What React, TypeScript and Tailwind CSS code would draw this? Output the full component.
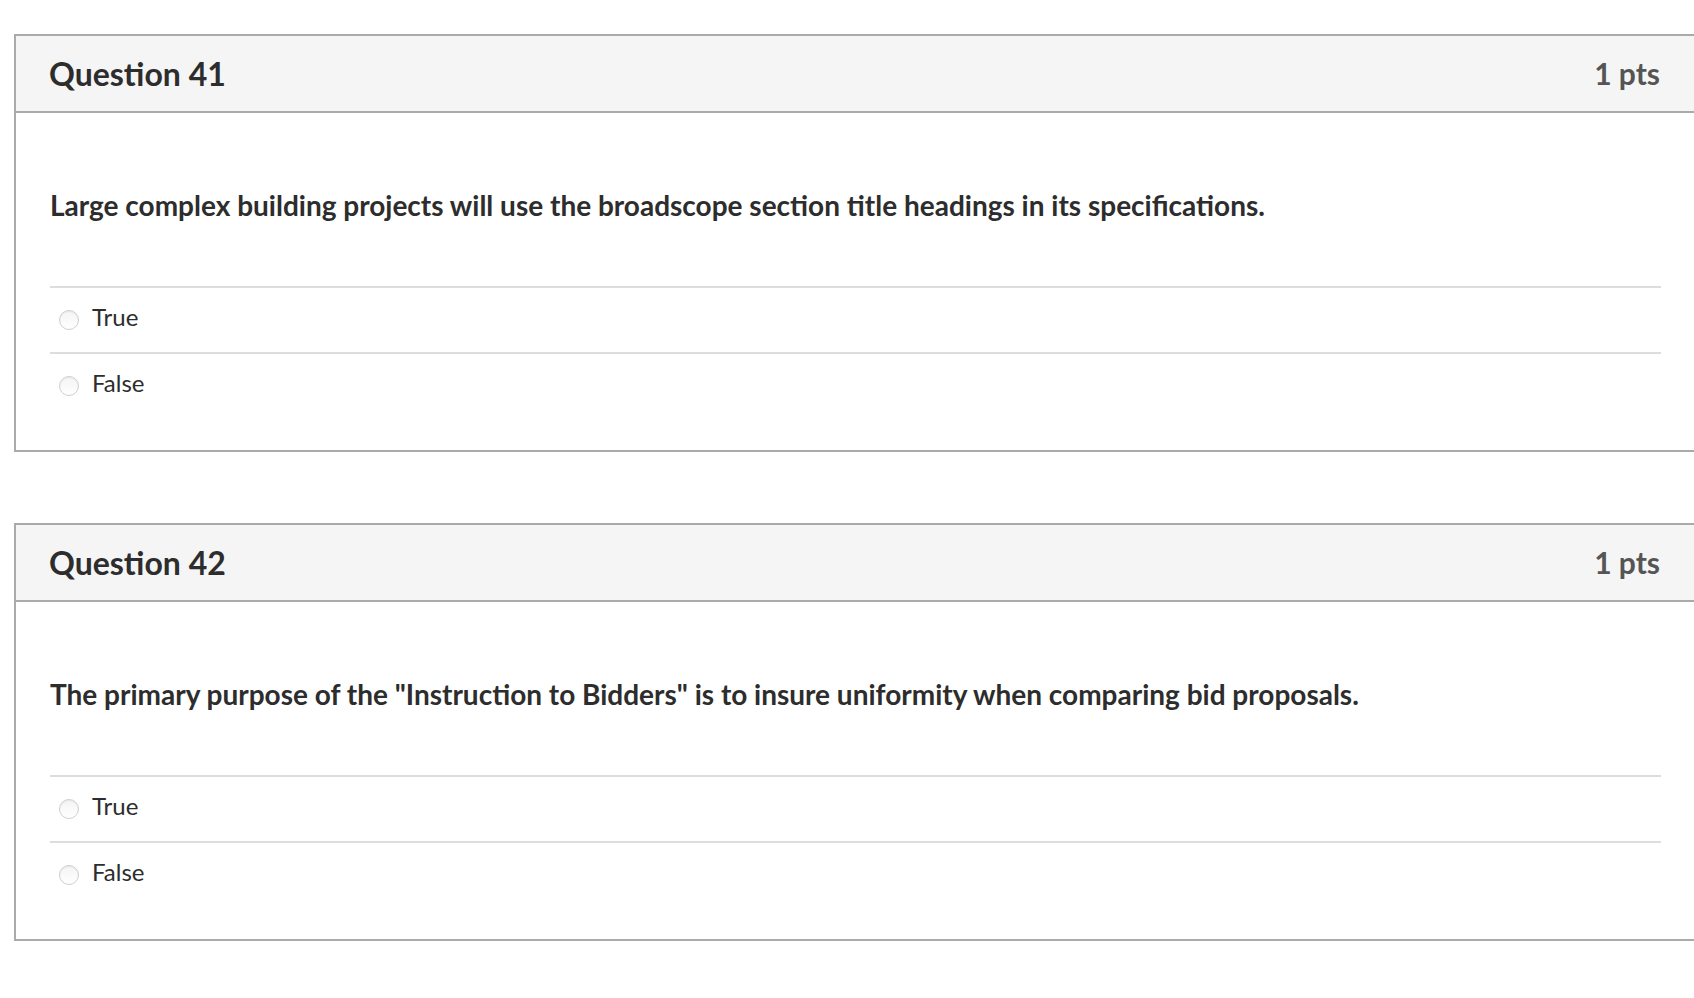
const questions = [
  {
    id: 41,
    points: 1,
    text: 'Large complex building projects will use the broadscope section title headings in its specifications.',
    answers: ['True', 'False'],
  },
  {
    id: 42,
    points: 1,
    text: 'The primary purpose of the "Instruction to Bidders" is to insure uniformity when comparing bid proposals.',
    answers: ['True', 'False'],
  },
];

function Radio() {
  return (
    <span className="ml-[9px] h-5 w-5 shrink-0 rounded-full border border-[#cfcfcf] bg-gradient-to-b from-[#f4f4f4] to-white shadow-[inset_0_1px_1px_rgba(0,0,0,0.06)]" />
  );
}

function QuestionCard({ q }: { q: (typeof questions)[number] }) {
  return (
    <div className="border-y-2 border-l-2 border-[#aaaaaa] bg-white">
      <header className="flex h-[77px] items-center justify-between border-b-2 border-[#aaaaaa] bg-[#f5f5f5] pl-[33px] pr-[34px]">
        <h2 className="text-[32px] font-bold text-[#2d2d2d]">Question {q.id}</h2>
        <span className="text-[30px] font-bold text-[#555555]">{q.points} pts</span>
      </header>
      <div className="pb-[32px] pl-[34px] pr-[33px] pt-[71px]">
        <p className="mb-[60px] text-[28px] font-bold leading-[42px] text-[#2d2d2d]">{q.text}</p>
        <ul>
          {q.answers.map((answer) => (
            <li key={answer} className="flex h-[66px] items-center gap-[13px] border-t-2 border-[#dddddd]">
              <Radio />
              <span className="mb-[6px] text-[24px] text-[#2d2d2d]">{answer}</span>
            </li>
          ))}
        </ul>
      </div>
    </div>
  );
}

export default function App() {
  return (
    <div className="min-h-[998px] bg-white pl-[14px] pt-[34px] font-['Lato',sans-serif]">
      <div className="flex flex-col gap-[71px]">
        {questions.map((q) => (
          <QuestionCard key={q.id} q={q} />
        ))}
      </div>
    </div>
  );
}
